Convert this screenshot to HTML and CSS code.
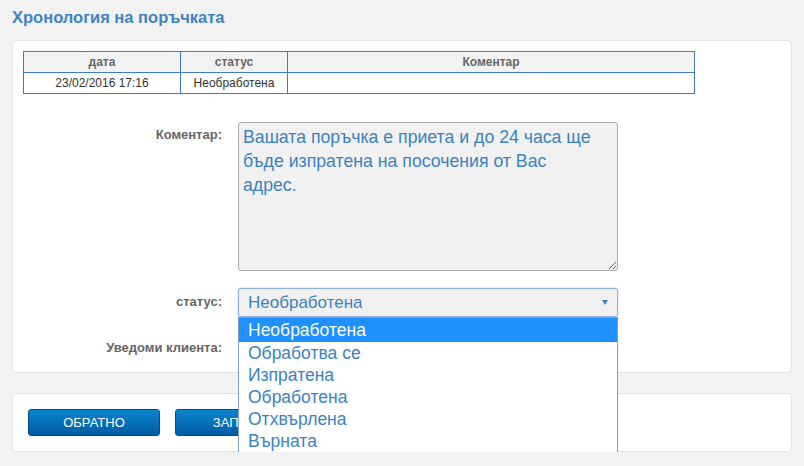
FILE: index.html
```html
<!DOCTYPE html>
<html lang="bg">
<head>
    <meta charset="UTF-8">
    <title>Хронология на поръчката</title>
    <link rel="stylesheet" href="styles.css">
</head>
<body>
    <div class="page">
        <h1 class="title">Хронология на поръчката</h1>

        <!--история-->
        <div class="box history">
            <table class="log">
                <tr>
                    <th class="c-date">дата</th>
                    <th class="c-status">статус</th>
                    <th>Коментар</th>
                </tr>
                <tr>
                    <td>23/02/2016 17:16</td>
                    <td>Необработена</td>
                    <td></td>
                </tr>
            </table>

            <div class="form">
                <label class="lbl lbl-comment">Коментар:</label>
                <div class="ctrl">
                    <textarea class="comment">Вашата поръчка е приета и до 24 часа ще бъде изпратена на посочения от Вас
адрес.</textarea>
                </div>

                <label class="lbl lbl-status">статус:</label>
                <div class="ctrl select-wrap">
                    <div class="select">
                        <span>Необработена</span>
                        <i class="arrow"></i>
                    </div>
                    <!--отворен списък-->
                    <ul class="options">
                        <li class="on">Необработена</li>
                        <li>Обработва се</li>
                        <li>Изпратена</li>
                        <li>Обработена</li>
                        <li>Отхвърлена</li>
                        <li>Върната</li>
                    </ul>
                </div>

                <label class="lbl lbl-notify">Уведоми клиента:</label>
                <div class="ctrl notify"></div>
            </div>
        </div>

        <!--бутони-->
        <div class="box actions">
            <button class="btn">ОБРАТНО</button>
            <button class="btn">ЗАПИШИ</button>
        </div>
    </div>
</body>
</html>
```

FILE: styles.css
```css
*{margin:0;padding:0;box-sizing:border-box;}
li{list-style: none}

body{
    background-color: #f2f2f2;
    font-family: "Liberation Sans", Arial, sans-serif;
    color: #555;
}

.page{
    padding: 0 12px;
}

.title{
    margin: 8px 0 14px;
    height: 18px;
    line-height: 18px;
    font-size: 16.5px;
    font-weight: bold;
    color: #3f83c5;
}

.box{
    background-color: #fff;
    border: 1px solid #e2e2e2;
    border-radius: 5px;
}

/*история*/
.history{
    height: 333px;
    padding: 10px;
}

.log{
    width: 672px;
    border-collapse: collapse;
    font-size: 12px;
}
.log th,
.log td{
    height: 21px;
    border: 1px solid #3b7fc0;
    text-align: center;
    padding: 0 4px;
}
.log th{
    background-color: #f2f2f2;
    color: #666;
    font-weight: bold;
}
.log td{
    color: #333;
}
.log .c-date{width: 157px;}
.log .c-status{width: 107px;}

/*форма*/
.form{
    display: grid;
    grid-template-columns: 199px 380px;
    column-gap: 16px;
    margin-top: 28px;
}

.lbl{
    text-align: right;
    font-size: 13px;
    font-weight: bold;
    color: #666;
}
.lbl-comment{padding-top: 5px;}
.lbl-status{padding-top: 23px;}
.lbl-notify{padding-top: 23px;}

.comment{
    display: block;
    width: 380px;
    height: 149px;
    padding: 2px 4px;
    background-color: #f1f1f1;
    border: 1px solid #aaa;
    border-radius: 3px;
    font-family: "Liberation Sans", Arial, sans-serif;
    font-size: 17.7px;
    line-height: 24px;
    color: #3b82c4;
    resize: vertical;
}

.select-wrap{
    position: relative;
    padding-top: 17px;
}
.select{
    display: flex;
    align-items: center;
    justify-content: space-between;
    height: 29px;
    padding: 0 9px;
    background-color: #f0f0f0;
    border: 1px solid #8fb1e0;
    border-radius: 3px;
    box-shadow: 0 0 2px #9fc0ec;
    font-size: 17px;
    color: #3b82c4;
}
.arrow{
    width: 0;
    height: 0;
    border-left: 3px solid transparent;
    border-right: 3px solid transparent;
    border-top: 5px solid #3b82c4;
}

.options{
    position: absolute;
    top: 46px;
    left: 0;
    width: 380px;
    padding-bottom: 2px;
    background-color: #fff;
    border: 1px solid #7f9fcf;
    font-size: 17.5px;
    color: #3b82c4;
    z-index: 2;
}
.options li{
    height: 22px;
    line-height: 22px;
    padding-left: 9px;
}
.options li.on{
    height: 24px;
    line-height: 24px;
    background-color: #1e90ff;
    color: #fff;
}

.notify{
    height: 38px;
}

/*бутони*/
.actions{
    display: flex;
    gap: 15px;
    height: 59px;
    margin-top: 20px;
    padding: 15px;
}
.btn{
    width: 132px;
    height: 27px;
    background: linear-gradient(#0a84cf, #005ba3);
    border: 1px solid #004d8c;
    border-radius: 3px;
    color: #fff;
    font-family: "Liberation Sans", Arial, sans-serif;
    font-size: 13px;
    cursor: pointer;
}
```
